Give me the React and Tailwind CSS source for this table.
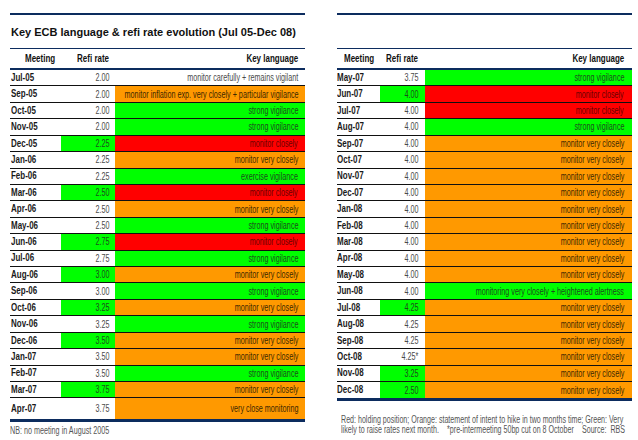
import React from "react";

const G = "bg-[#00ff00] text-[#1d4d1d]";
const R = "bg-[#ff0000] text-[#6a0000]";
const O = "bg-[#ff9900] text-[#3d2800]";
const W = "bg-white text-[#4a4a4a]";

const left = [
  ["Jul-05", "2.00", W, W, "monitor carefully + remains vigilant"],
  ["Sep-05", "2.00", W, O, "monitor inflation exp. very closely + particular vigilance"],
  ["Oct-05", "2.00", W, G, "strong vigilance"],
  ["Nov-05", "2.00", W, G, "strong vigilance"],
  ["Dec-05", "2.25", G, R, "monitor closely"],
  ["Jan-06", "2.25", W, O, "monitor very closely"],
  ["Feb-06", "2.25", W, G, "exercise vigilance"],
  ["Mar-06", "2.50", G, R, "monitor closely"],
  ["Apr-06", "2.50", W, O, "monitor very closely"],
  ["May-06", "2.50", W, G, "strong vigilance"],
  ["Jun-06", "2.75", G, R, "monitor closely"],
  ["Jul-06", "2.75", W, G, "strong vigilance"],
  ["Aug-06", "3.00", G, O, "monitor very closely"],
  ["Sep-06", "3.00", W, G, "strong vigilance"],
  ["Oct-06", "3.25", G, O, "monitor very closely"],
  ["Nov-06", "3.25", W, G, "strong vigilance"],
  ["Dec-06", "3.50", G, O, "monitor very closely"],
  ["Jan-07", "3.50", W, O, "monitor very closely"],
  ["Feb-07", "3.50", W, G, "strong vigilance"],
  ["Mar-07", "3.75", G, O, "monitor very closely"],
  ["Apr-07", "3.75", W, O, "very close monitoring"],
];

const mvc = "monitor very closely";
const right = [
  ["May-07", "3.75", W, G, "strong vigilance"],
  ["Jun-07", "4.00", G, R, "monitor closely"],
  ["Jul-07", "4.00", W, R, "monitor closely"],
  ["Aug-07", "4.00", W, G, "strong vigilance"],
  ["Sep-07", "4.00", W, O, mvc],
  ["Oct-07", "4.00", W, O, mvc],
  ["Nov-07", "4.00", W, O, mvc],
  ["Dec-07", "4.00", W, O, mvc],
  ["Jan-08", "4.00", W, O, mvc],
  ["Feb-08", "4.00", W, O, mvc],
  ["Mar-08", "4.00", W, O, mvc],
  ["Apr-08", "4.00", W, O, mvc],
  ["May-08", "4.00", W, O, mvc],
  ["Jun-08", "4.00", W, G, "monitoring very closely + heightened alertness"],
  ["Jul-08", "4.25", G, O, mvc],
  ["Aug-08", "4.25", W, O, mvc],
  ["Sep-08", "4.25", W, O, mvc],
  ["Oct-08", "4.25*", W, O, mvc],
  ["Nov-08", "3.25", G, O, mvc],
  ["Dec-08", "2.50", G, O, mvc],
];

const font = "font-['Liberation_Sans',Arial,sans-serif]";

function NR({ children }) {
  return <span className="inline-block shrink-0 whitespace-nowrap scale-x-[0.72] origin-right">{children}</span>;
}
function BL({ children }) {
  return <span className="inline-block shrink-0 whitespace-nowrap scale-x-[0.76] origin-left">{children}</span>;
}
function BR({ children }) {
  return <span className="inline-block shrink-0 whitespace-nowrap scale-x-[0.76] origin-right">{children}</span>;
}

function Table({ rows, wMeet, wRate, headPad, ratePad, keyPad, meetPad, tall }) {
  return (
    <div className={`flex flex-col ${font}`}>
      <div className="h-[22px] border-t border-b-2 border-[#0c2c5e] flex items-center text-[10.5px] font-bold text-[#111]">
        <div className={`${wMeet} ${headPad} flex min-w-0`}><BL>Meeting</BL></div>
        <div className={`${wRate} ${ratePad} flex justify-end min-w-0`}><BR>Refi rate</BR></div>
        <div className={`flex-1 ${keyPad} flex justify-end min-w-0`}><BR>Key language</BR></div>
      </div>
      {rows.map((r, i) => {
        const last = i === rows.length - 1;
        const al = last && tall ? "items-start pt-[3px]" : "items-center";
        return (
          <div
            key={r[0]}
            className={`flex ${last ? (tall ? "h-[21px]" : "h-[16.4px]") : "h-[16.43px] border-b border-[#111]"}`}
          >
            <div className={`${wMeet} ${meetPad} bg-white text-[10.5px] font-bold text-[#1a1a1a] flex min-w-0 ${al}`}>
              <BL>{r[0]}</BL>
            </div>
            <div className={`${wRate} ${r[2]} ${ratePad} text-[10px] flex justify-end min-w-0 ${al}`}>
              <NR>{r[1]}</NR>
            </div>
            <div className={`flex-1 ${r[3]} ${keyPad} text-[10px] flex justify-end min-w-0 ${al}`}>
              <NR>{r[4]}</NR>
            </div>
          </div>
        );
      })}
      <div className="h-[3px] bg-[#0c2c5e]" />
    </div>
  );
}

export default function App() {
  return (
    <div className="w-[638px] h-[440px] bg-white flex gap-[32px] pl-[10px] overflow-hidden">
      <div className="w-[295px] flex flex-col">
        <div className="mt-[13px] h-[2px] bg-[#0c2c5e]" />
        <div className={`h-[33px] flex items-center pl-[1px] ${font} font-bold text-[11px] text-[#111] whitespace-nowrap pt-[1px]`}>
          Key ECB language &amp; refi rate evolution (Jul 05-Dec 08)
        </div>
        <Table rows={left} wMeet="w-[51px]" wRate="w-[54px]" headPad="pl-[15px]" ratePad="pr-[6px]" keyPad="pr-[7px]" meetPad="pl-[1px]" tall />
        <div className={`${font} text-[10px] text-[#555] mt-[1px] flex`}>
          <span className="inline-block shrink-0 whitespace-nowrap scale-x-[0.72] origin-left">NB: no meeting in August 2005</span>
        </div>
      </div>
      <div className="w-[295px] flex flex-col">
        <div className="mt-[13px] h-[2px] bg-[#0c2c5e]" />
        <div className="h-[33px]" />
        <Table rows={right} wMeet="w-[43px]" wRate="w-[45px]" headPad="pl-[7px]" ratePad="pr-[7px]" keyPad="pr-[8px]" meetPad="pl-0" />
        <div className={`${font} text-[10px] leading-[10px] text-[#555] mt-[14px] ml-[4px] flex`}>
          <div className="w-[400px] shrink-0 scale-x-[0.71] origin-left">
            <div className="text-justify [text-align-last:justify] whitespace-nowrap flex justify-between">
              <span>Red: holding position; Orange: statement of intent to hike in two months time; Green: Very</span>
            </div>
            <div className="flex justify-between whitespace-nowrap">
              <span>likely to raise rates next month.</span>
              <span>*pre-intermeeting 50bp cut on 8 October</span>
              <span>Source:&nbsp; RBS</span>
            </div>
          </div>
        </div>
      </div>
    </div>
  );
}
